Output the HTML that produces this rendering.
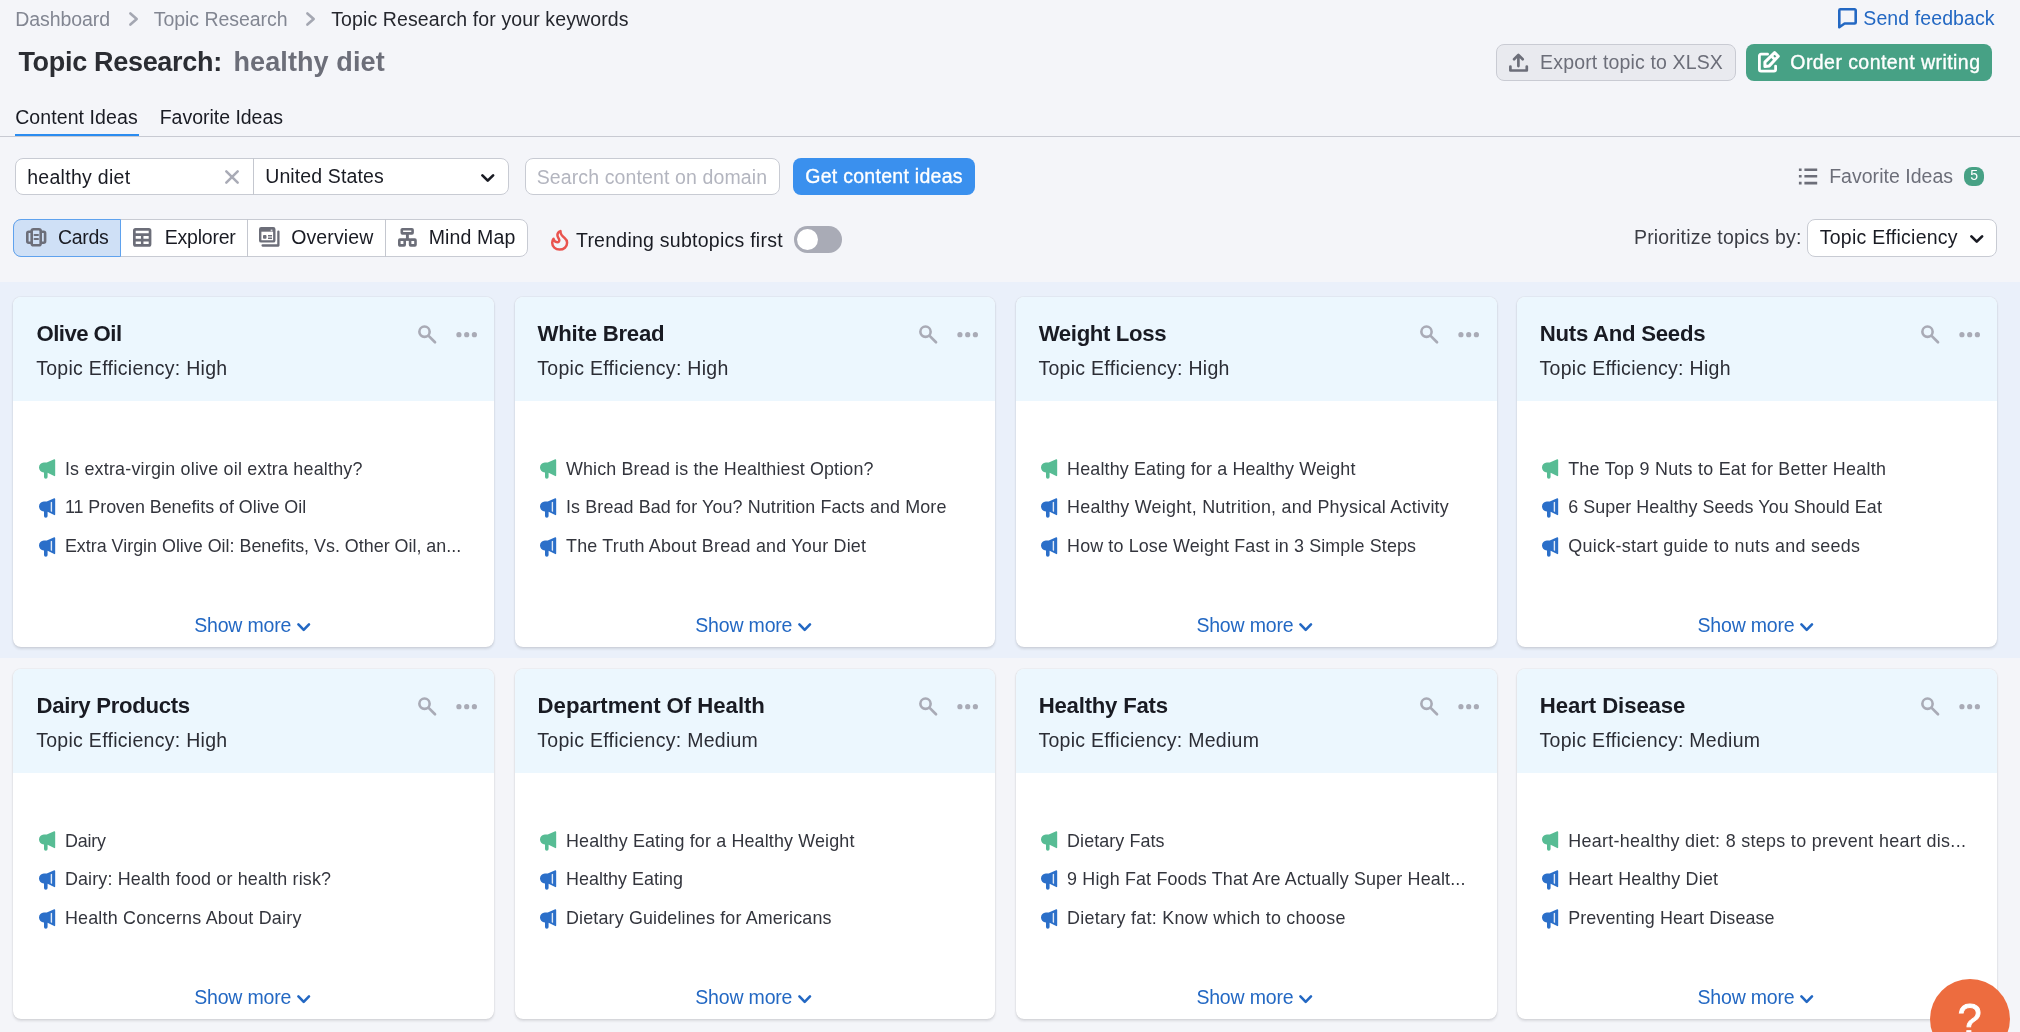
<!DOCTYPE html>
<html lang="en"><head><meta charset="utf-8"><title>Topic Research: healthy diet</title>
<style>
*{box-sizing:border-box;margin:0;padding:0}
html,body{width:2020px;height:1032px;overflow:hidden;background:#f4f5f9}
body{position:relative;font-family:"Liberation Sans",sans-serif;}
#root{position:absolute;left:0;top:0;width:2020px;height:1032px;will-change:transform}
.t{position:absolute;white-space:nowrap;line-height:1em;display:block}
.a{position:absolute;display:block}
svg{position:absolute;display:block;overflow:visible}
.card{position:absolute;width:480.8px;height:350px;background:#fff;border-radius:8px;box-shadow:0 0 1.3px rgba(25,27,35,.16),0 1.3px 2.7px rgba(25,27,35,.12);overflow:hidden}
.card .hd{position:absolute;left:0;top:0;right:0;height:104px;background:#ecf7fe}
</style></head>
<body>
<div id="root">
<div class="a" style="left:0;top:281.5px;width:2020px;height:376px;background:#eaf0fa"></div>
<span class="t" style="left:15.20px;top:10.00px;font-size:19.5px;letter-spacing:-0.059px;color:#828692;">Dashboard</span>
<span class="t" style="left:153.70px;top:10.00px;font-size:19.5px;letter-spacing:-0.037px;color:#828692;">Topic Research</span>
<span class="t" style="left:331.20px;top:10.00px;font-size:19.5px;letter-spacing:0.118px;color:#25272e;">Topic Research for your keywords</span>
<svg style="left:128.8px;top:12px" width="9.2" height="14" viewBox="0 0 9.2 14"><path d="M1.4 1.4 L7.7 7 L1.4 12.6" fill="none" stroke="#a4a7b2" stroke-width="2.6" stroke-linecap="round" stroke-linejoin="round"/></svg>
<svg style="left:305.8px;top:12px" width="9.2" height="14" viewBox="0 0 9.2 14"><path d="M1.4 1.4 L7.7 7 L1.4 12.6" fill="none" stroke="#a4a7b2" stroke-width="2.6" stroke-linecap="round" stroke-linejoin="round"/></svg>
<svg style="left:1837.7px;top:8px" width="19" height="20.6" viewBox="0 0 19 20.6"><path d="M1.3 19.2 V2.4 A1.1 1.1 0 0 1 2.4 1.3 H16.6 A1.1 1.1 0 0 1 17.7 2.4 V14.4 A1.1 1.1 0 0 1 16.6 15.5 H6.6 Z" fill="none" stroke="#2368c3" stroke-width="2.6" stroke-linejoin="round"/></svg>
<span class="t" style="left:1863.30px;top:9.00px;font-size:19.5px;letter-spacing:0.096px;color:#2368c3;">Send feedback</span>
<span class="t" style="left:18.45px;top:49.00px;font-size:27px;letter-spacing:-0.311px;color:#2b2d33;font-weight:700;">Topic Research:</span>
<span class="t" style="left:233.45px;top:49.00px;font-size:27px;letter-spacing:0.105px;color:#6c6e79;font-weight:700;">healthy diet</span>
<div class="a" style="left:1496px;top:44.1px;width:240px;height:36.6px;background:#e9eaef;border:1px solid #c9cbd3;border-radius:8px"></div>
<svg style="left:1509.2px;top:52.9px" width="19.2" height="18.9" viewBox="0 0 19.2 18.9"><path d="M9.4 13.1 V2.2 M5.1 6.2 L9.4 1.9 L13.7 6.2 M1.4 13.6 V17.5 H17.8 V13.6" fill="none" stroke="#6c6e79" stroke-width="2.7" stroke-linecap="round" stroke-linejoin="round"/></svg>
<span class="t" style="left:1540.10px;top:53.00px;font-size:19.5px;letter-spacing:0.149px;color:#6c6e79;">Export topic to XLSX</span>
<div class="a" style="left:1746.3px;top:44.1px;width:246.2px;height:36.6px;background:#47a185;border-radius:8px"></div>
<svg style="left:1758.1px;top:51.3px" width="22" height="21.7" viewBox="0 0 22 21.7"><path d="M9.6 3.15 H3 A1.6 1.6 0 0 0 1.4 4.75 V18.5 A1.6 1.6 0 0 0 3 20.1 H16 A1.6 1.6 0 0 0 17.6 18.5 V15.1" fill="none" stroke="#fff" stroke-width="2.8" stroke-linecap="round" stroke-linejoin="round"/><path d="M16.6 1.6 L20.3 5.3 L11.3 14.9 L6.9 15.5 L6.9 11.1 Z" fill="none" stroke="#fff" stroke-width="3" stroke-linejoin="round"/><path d="M13.3 5 L17 8.7" stroke="#fff" stroke-width="2.8"/></svg>
<span class="t" style="left:1790.30px;top:53.00px;font-size:19.5px;letter-spacing:0.435px;color:#fff;-webkit-text-stroke:0.35px #fff;">Order content writing</span>
<span class="t" style="left:15.20px;top:108.00px;font-size:19.5px;letter-spacing:0.085px;color:#191b23;">Content Ideas</span>
<span class="t" style="left:159.70px;top:108.00px;font-size:19.5px;letter-spacing:-0.017px;color:#191b23;">Favorite Ideas</span>
<div class="a" style="left:0;top:135.7px;width:2020px;height:1.3px;background:#c8cad2"></div>
<div class="a" style="left:15px;top:134px;width:124px;height:2.4px;background:#2b8cf0"></div>
<div class="a" style="left:15px;top:158px;width:494px;height:37px;background:#fff;border:1px solid #c8cbd3;border-radius:8px"></div>
<div class="a" style="left:252.7px;top:158px;width:1.2px;height:37px;background:#c4c7cf"></div>
<span class="t" style="left:27.20px;top:168.00px;font-size:19.5px;letter-spacing:0.286px;color:#191b23;">healthy diet</span>
<svg style="left:225px;top:170px" width="14" height="14" viewBox="0 0 14 14"><path d="M1.3 1.3 L12.7 12.7 M12.7 1.3 L1.3 12.7" fill="none" stroke="#a9abb6" stroke-width="2.5" stroke-linecap="round"/></svg>
<span class="t" style="left:265.20px;top:167.00px;font-size:19.5px;letter-spacing:0.127px;color:#191b23;">United States</span>
<svg style="left:481.3px;top:174.2px" width="13.5" height="8" viewBox="0 0 13.5 8"><path d="M1.4 1.4 L6.75 6.6 L12.1 1.4" fill="none" stroke="#191b23" stroke-width="2.7" stroke-linecap="round" stroke-linejoin="round"/></svg>
<div class="a" style="left:524.5px;top:158px;width:255.3px;height:37px;background:#fff;border:1px solid #c8cbd3;border-radius:8px"></div>
<span class="t" style="left:536.70px;top:168.00px;font-size:19.5px;letter-spacing:0.121px;color:#b3b5bf;">Search content on domain</span>
<div class="a" style="left:793px;top:158px;width:182px;height:37px;background:#3a90ee;border-radius:8px"></div>
<span class="t" style="left:805.20px;top:167.00px;font-size:19.5px;letter-spacing:0.283px;color:#fff;-webkit-text-stroke:0.35px #fff;">Get content ideas</span>
<svg style="left:1797.5px;top:168.2px" width="20" height="17" viewBox="0 0 20 17"><path d="M6.4 1.8 H19.2 M6.4 8.2 H19.2 M6.4 15.1 H19.2 M.9 1.8 H3.6 M.9 8.2 H3.6 M.9 15.1 H3.6" stroke="#6c6e79" stroke-width="2.6" fill="none"/></svg>
<span class="t" style="left:1829.20px;top:167.00px;font-size:19.5px;letter-spacing:0.021px;color:#6c6e79;">Favorite Ideas</span>
<div class="a" style="left:1964px;top:167px;width:20.3px;height:19.3px;background:#47a185;border-radius:8px"></div>
<span class="t" style="left:1970.30px;top:168.00px;font-size:14px;letter-spacing:0.000px;color:#fff;">5</span>
<div class="a" style="left:13px;top:219px;width:514.5px;height:37.6px;background:#fff;border:1px solid #c8cbd3;border-radius:8px"></div>
<div class="a" style="left:13px;top:219px;width:108.3px;height:37.6px;background:#cfe0f6;border:1.3px solid #5fa2ee;border-radius:8px 0 0 8px"></div>
<div class="a" style="left:246.7px;top:219px;width:1.2px;height:37.6px;background:#c4c7cf"></div>
<div class="a" style="left:384.7px;top:219px;width:1.2px;height:37.6px;background:#c4c7cf"></div>
<svg style="left:26px;top:228.4px" width="20.4" height="18.5" viewBox="0 0 20.4 18.5"><g fill="none" stroke="#6c6e79" stroke-width="2.6" stroke-linejoin="round"><rect x="5.7" y="1.3" width="9" height="15.9" rx="1.8"/><path d="M5.7 3.7 H2.8 A1.5 1.5 0 0 0 1.3 5.2 V13.3 A1.5 1.5 0 0 0 2.8 14.8 H5.7 M14.7 3.7 H17.6 A1.5 1.5 0 0 1 19.1 5.2 V13.3 A1.5 1.5 0 0 1 17.6 14.8 H14.7"/></g><path d="M8.6 7 H12 M8.6 11 H12" stroke="#6c6e79" stroke-width="2.1" stroke-linecap="round"/></svg>
<span class="t" style="left:57.95px;top:228.00px;font-size:19.5px;letter-spacing:-0.275px;color:#191b23;">Cards</span>
<svg style="left:133.3px;top:228.4px" width="18.4" height="18.7" viewBox="0 0 18.4 18.7"><g fill="none" stroke="#6c6e79"><rect x="1.35" y="1.35" width="15.7" height="16" rx="1.2" stroke-width="2.7"/><path d="M1.3 6.65 H17.1 M1.3 12.05 H17.1" stroke-width="2.7"/><path d="M9.2 6.65 V17.4" stroke-width="2.5"/></g></svg>
<span class="t" style="left:164.70px;top:228.00px;font-size:19.5px;letter-spacing:-0.211px;color:#191b23;">Explorer</span>
<svg style="left:259.4px;top:227px" width="20.6" height="19.7" viewBox="0 0 20.6 19.7"><g fill="none" stroke="#6c6e79" stroke-linejoin="round"><rect x="1.2" y="1.2" width="14.1" height="13.2" rx="1" stroke-width="2.4"/><path d="M1.2 2.9 H15.3" stroke-width="3.6"/><path d="M19.4 4.6 V18.5 H3.6" stroke-width="2.3" stroke-linecap="round"/><path d="M9 8.8 H13 M9 11.2 H13" stroke-width="1.4"/></g><rect x="4" y="8.1" width="3.5" height="3.6" rx=".9" fill="#6c6e79"/><rect x="11.7" y="2.6" width="1.7" height="1.7" fill="#fff" opacity=".75"/></svg>
<span class="t" style="left:291.20px;top:228.00px;font-size:19.5px;letter-spacing:0.111px;color:#191b23;">Overview</span>
<svg style="left:398.1px;top:228.4px" width="18.8" height="18.7" viewBox="0 0 18.8 18.7"><g fill="none" stroke="#6c6e79" stroke-width="2.6" stroke-linejoin="round"><rect x="3.8" y="1.3" width="10.8" height="4.1" rx=".6"/><rect x="1.3" y="11.6" width="5.4" height="5.8" rx=".6"/><rect x="12.1" y="11.6" width="5.4" height="5.8" rx=".6"/><path d="M6.7 11.6 H12.1"/><path d="M9.4 5.4 V11.6" stroke-width="2.9"/></g></svg>
<span class="t" style="left:428.70px;top:228.00px;font-size:19.5px;letter-spacing:0.139px;color:#191b23;">Mind Map</span>
<svg style="left:551px;top:230px" width="17.3" height="20.8" viewBox="0 0 17.3 20.8"><path d="M9.5 1.1 C9.3 4 11 6 13.6 8 C15.4 9.4 16.1 11 16.1 12.8 C16.1 16.8 12.8 19.6 8.6 19.6 C4.4 19.6 1.2 16.8 1.2 12.8 C1.2 11.2 1.7 9.8 2.5 8.8 C2.9 10.6 4.2 12.2 6.2 12.2 C7.8 12.2 8.6 11 8.2 9.6 C7.8 8.2 6.4 7 6.4 5 C6.4 3.2 7.6 1.8 9.5 1.1 Z" fill="none" stroke="#e9544f" stroke-width="2.5" stroke-linejoin="round"/></svg>
<span class="t" style="left:575.95px;top:231.00px;font-size:19.5px;letter-spacing:0.251px;color:#191b23;">Trending subtopics first</span>
<div class="a" style="left:793.7px;top:226.2px;width:48.4px;height:26.5px;background:#a9abb6;border-radius:13.3px"></div>
<div class="a" style="left:796.8px;top:228.9px;width:21.2px;height:21.2px;background:#fff;border-radius:50%"></div>
<span class="t" style="left:1633.95px;top:228.00px;font-size:19.5px;letter-spacing:0.189px;color:#3b3d45;">Prioritize topics by:</span>
<div class="a" style="left:1807px;top:219px;width:189.7px;height:37.6px;background:#fff;border:1px solid #c8cbd3;border-radius:8px"></div>
<span class="t" style="left:1819.70px;top:228.00px;font-size:19.5px;letter-spacing:0.260px;color:#191b23;">Topic Efficiency</span>
<svg style="left:1970px;top:234.8px" width="13.5" height="8" viewBox="0 0 13.5 8"><path d="M1.4 1.4 L6.75 6.6 L12.1 1.4" fill="none" stroke="#191b23" stroke-width="2.7" stroke-linecap="round" stroke-linejoin="round"/></svg>
<div class="card" style="left:13.00px;top:297.00px"><div class="hd"></div></div>
<span class="t" style="left:36.50px;top:323.00px;font-size:22.2px;letter-spacing:-0.556px;color:#191b23;font-weight:700;">Olive Oil</span>
<span class="t" style="left:36.20px;top:359.00px;font-size:19.5px;letter-spacing:0.286px;color:#2b2d35;">Topic Efficiency: High</span>
<svg style="left:417.80px;top:325.40px" width="19" height="19" viewBox="0 0 19 19"><circle cx="6.5" cy="6.7" r="5.15" fill="none" stroke="#a9abb6" stroke-width="2.6"/><path d="M10.4 10.6 L17 17.2" stroke="#a9abb6" stroke-width="2.7" stroke-linecap="round"/></svg>
<svg style="left:456.00px;top:332.20px" width="22" height="5.4" viewBox="0 0 22 5.4"><circle cx="2.9" cy="2.7" r="2.6" fill="#a9abb6"/><circle cx="10.7" cy="2.7" r="2.6" fill="#a9abb6"/><circle cx="18.4" cy="2.7" r="2.6" fill="#a9abb6"/></svg>
<svg style="left:38.90px;top:459.30px" width="16.2" height="20" viewBox="0 0 16.2 20"><path d="M15.2 .2 C15.7 0 16.2 .3 16.2 .9 V16.4 C16.2 17 15.7 17.4 15.2 17.1 L8.6 13.8 V18 A1.8 1.8 0 0 1 5 18 V13.4 H4.8 A4.9 4.9 0 0 1 0 8.45 A4.9 4.9 0 0 1 4.8 3.5 H7.8 Z" fill="#57bc94"/></svg>
<span class="t" style="left:64.90px;top:461.00px;font-size:17.9px;letter-spacing:0.210px;color:#33353d;">Is extra-virgin olive oil extra healthy?</span>
<svg style="left:38.90px;top:498.00px" width="16.2" height="20" viewBox="0 0 16.2 20"><path d="M15.2 .2 C15.7 0 16.2 .3 16.2 .9 V16.4 C16.2 17 15.7 17.4 15.2 17.1 L8.6 13.8 V18 A1.8 1.8 0 0 1 5 18 V13.4 H4.8 A4.9 4.9 0 0 1 0 8.45 A4.9 4.9 0 0 1 4.8 3.5 H7.8 Z" fill="#2b6fc9"/><path d="M11.7 4.3 L13.1 3.7 V13.9 L11.7 13.2 Z" fill="#fff" opacity=".85"/></svg>
<span class="t" style="left:64.90px;top:499.00px;font-size:17.9px;letter-spacing:-0.034px;color:#33353d;">11 Proven Benefits of Olive Oil</span>
<svg style="left:38.90px;top:536.70px" width="16.2" height="20" viewBox="0 0 16.2 20"><path d="M15.2 .2 C15.7 0 16.2 .3 16.2 .9 V16.4 C16.2 17 15.7 17.4 15.2 17.1 L8.6 13.8 V18 A1.8 1.8 0 0 1 5 18 V13.4 H4.8 A4.9 4.9 0 0 1 0 8.45 A4.9 4.9 0 0 1 4.8 3.5 H7.8 Z" fill="#2b6fc9"/><path d="M11.7 4.3 L13.1 3.7 V13.9 L11.7 13.2 Z" fill="#fff" opacity=".85"/></svg>
<span class="t" style="left:64.90px;top:538.00px;font-size:17.9px;letter-spacing:-0.002px;color:#33353d;">Extra Virgin Olive Oil: Benefits, Vs. Other Oil, an...</span>
<span class="t" style="left:194.20px;top:616.00px;font-size:19.5px;letter-spacing:-0.184px;color:#2368c3;">Show more</span>
<svg style="left:296.7px;top:623.3px" width="13.4" height="8.2" viewBox="0 0 13.4 8.2"><path d="M1.4 1.4 L6.7 6.799999999999999 L12.0 1.4" fill="none" stroke="#2368c3" stroke-width="2.6" stroke-linecap="round" stroke-linejoin="round"/></svg>
<div class="card" style="left:514.50px;top:297.00px"><div class="hd"></div></div>
<span class="t" style="left:537.60px;top:323.00px;font-size:22.2px;letter-spacing:-0.246px;color:#191b23;font-weight:700;">White Bread</span>
<span class="t" style="left:537.30px;top:359.00px;font-size:19.5px;letter-spacing:0.286px;color:#2b2d35;">Topic Efficiency: High</span>
<svg style="left:918.90px;top:325.40px" width="19" height="19" viewBox="0 0 19 19"><circle cx="6.5" cy="6.7" r="5.15" fill="none" stroke="#a9abb6" stroke-width="2.6"/><path d="M10.4 10.6 L17 17.2" stroke="#a9abb6" stroke-width="2.7" stroke-linecap="round"/></svg>
<svg style="left:957.10px;top:332.20px" width="22" height="5.4" viewBox="0 0 22 5.4"><circle cx="2.9" cy="2.7" r="2.6" fill="#a9abb6"/><circle cx="10.7" cy="2.7" r="2.6" fill="#a9abb6"/><circle cx="18.4" cy="2.7" r="2.6" fill="#a9abb6"/></svg>
<svg style="left:540.00px;top:459.30px" width="16.2" height="20" viewBox="0 0 16.2 20"><path d="M15.2 .2 C15.7 0 16.2 .3 16.2 .9 V16.4 C16.2 17 15.7 17.4 15.2 17.1 L8.6 13.8 V18 A1.8 1.8 0 0 1 5 18 V13.4 H4.8 A4.9 4.9 0 0 1 0 8.45 A4.9 4.9 0 0 1 4.8 3.5 H7.8 Z" fill="#57bc94"/></svg>
<span class="t" style="left:566.00px;top:461.00px;font-size:17.9px;letter-spacing:0.144px;color:#33353d;">Which Bread is the Healthiest Option?</span>
<svg style="left:540.00px;top:498.00px" width="16.2" height="20" viewBox="0 0 16.2 20"><path d="M15.2 .2 C15.7 0 16.2 .3 16.2 .9 V16.4 C16.2 17 15.7 17.4 15.2 17.1 L8.6 13.8 V18 A1.8 1.8 0 0 1 5 18 V13.4 H4.8 A4.9 4.9 0 0 1 0 8.45 A4.9 4.9 0 0 1 4.8 3.5 H7.8 Z" fill="#2b6fc9"/><path d="M11.7 4.3 L13.1 3.7 V13.9 L11.7 13.2 Z" fill="#fff" opacity=".85"/></svg>
<span class="t" style="left:566.00px;top:499.00px;font-size:17.9px;letter-spacing:0.121px;color:#33353d;">Is Bread Bad for You? Nutrition Facts and More</span>
<svg style="left:540.00px;top:536.70px" width="16.2" height="20" viewBox="0 0 16.2 20"><path d="M15.2 .2 C15.7 0 16.2 .3 16.2 .9 V16.4 C16.2 17 15.7 17.4 15.2 17.1 L8.6 13.8 V18 A1.8 1.8 0 0 1 5 18 V13.4 H4.8 A4.9 4.9 0 0 1 0 8.45 A4.9 4.9 0 0 1 4.8 3.5 H7.8 Z" fill="#2b6fc9"/><path d="M11.7 4.3 L13.1 3.7 V13.9 L11.7 13.2 Z" fill="#fff" opacity=".85"/></svg>
<span class="t" style="left:566.00px;top:538.00px;font-size:17.9px;letter-spacing:0.223px;color:#33353d;">The Truth About Bread and Your Diet</span>
<span class="t" style="left:695.30px;top:616.00px;font-size:19.5px;letter-spacing:-0.184px;color:#2368c3;">Show more</span>
<svg style="left:797.8px;top:623.3px" width="13.4" height="8.2" viewBox="0 0 13.4 8.2"><path d="M1.4 1.4 L6.7 6.799999999999999 L12.0 1.4" fill="none" stroke="#2368c3" stroke-width="2.6" stroke-linecap="round" stroke-linejoin="round"/></svg>
<div class="card" style="left:1015.85px;top:297.00px"><div class="hd"></div></div>
<span class="t" style="left:1038.70px;top:323.00px;font-size:22.2px;letter-spacing:-0.368px;color:#191b23;font-weight:700;">Weight Loss</span>
<span class="t" style="left:1038.40px;top:359.00px;font-size:19.5px;letter-spacing:0.286px;color:#2b2d35;">Topic Efficiency: High</span>
<svg style="left:1420.00px;top:325.40px" width="19" height="19" viewBox="0 0 19 19"><circle cx="6.5" cy="6.7" r="5.15" fill="none" stroke="#a9abb6" stroke-width="2.6"/><path d="M10.4 10.6 L17 17.2" stroke="#a9abb6" stroke-width="2.7" stroke-linecap="round"/></svg>
<svg style="left:1458.20px;top:332.20px" width="22" height="5.4" viewBox="0 0 22 5.4"><circle cx="2.9" cy="2.7" r="2.6" fill="#a9abb6"/><circle cx="10.7" cy="2.7" r="2.6" fill="#a9abb6"/><circle cx="18.4" cy="2.7" r="2.6" fill="#a9abb6"/></svg>
<svg style="left:1041.10px;top:459.30px" width="16.2" height="20" viewBox="0 0 16.2 20"><path d="M15.2 .2 C15.7 0 16.2 .3 16.2 .9 V16.4 C16.2 17 15.7 17.4 15.2 17.1 L8.6 13.8 V18 A1.8 1.8 0 0 1 5 18 V13.4 H4.8 A4.9 4.9 0 0 1 0 8.45 A4.9 4.9 0 0 1 4.8 3.5 H7.8 Z" fill="#57bc94"/></svg>
<span class="t" style="left:1067.10px;top:461.00px;font-size:17.9px;letter-spacing:0.154px;color:#33353d;">Healthy Eating for a Healthy Weight</span>
<svg style="left:1041.10px;top:498.00px" width="16.2" height="20" viewBox="0 0 16.2 20"><path d="M15.2 .2 C15.7 0 16.2 .3 16.2 .9 V16.4 C16.2 17 15.7 17.4 15.2 17.1 L8.6 13.8 V18 A1.8 1.8 0 0 1 5 18 V13.4 H4.8 A4.9 4.9 0 0 1 0 8.45 A4.9 4.9 0 0 1 4.8 3.5 H7.8 Z" fill="#2b6fc9"/><path d="M11.7 4.3 L13.1 3.7 V13.9 L11.7 13.2 Z" fill="#fff" opacity=".85"/></svg>
<span class="t" style="left:1067.10px;top:499.00px;font-size:17.9px;letter-spacing:0.258px;color:#33353d;">Healthy Weight, Nutrition, and Physical Activity</span>
<svg style="left:1041.10px;top:536.70px" width="16.2" height="20" viewBox="0 0 16.2 20"><path d="M15.2 .2 C15.7 0 16.2 .3 16.2 .9 V16.4 C16.2 17 15.7 17.4 15.2 17.1 L8.6 13.8 V18 A1.8 1.8 0 0 1 5 18 V13.4 H4.8 A4.9 4.9 0 0 1 0 8.45 A4.9 4.9 0 0 1 4.8 3.5 H7.8 Z" fill="#2b6fc9"/><path d="M11.7 4.3 L13.1 3.7 V13.9 L11.7 13.2 Z" fill="#fff" opacity=".85"/></svg>
<span class="t" style="left:1067.10px;top:538.00px;font-size:17.9px;letter-spacing:0.129px;color:#33353d;">How to Lose Weight Fast in 3 Simple Steps</span>
<span class="t" style="left:1196.40px;top:616.00px;font-size:19.5px;letter-spacing:-0.184px;color:#2368c3;">Show more</span>
<svg style="left:1298.9px;top:623.3px" width="13.4" height="8.2" viewBox="0 0 13.4 8.2"><path d="M1.4 1.4 L6.7 6.799999999999999 L12.0 1.4" fill="none" stroke="#2368c3" stroke-width="2.6" stroke-linecap="round" stroke-linejoin="round"/></svg>
<div class="card" style="left:1516.50px;top:297.00px"><div class="hd"></div></div>
<span class="t" style="left:1539.80px;top:323.00px;font-size:22.2px;letter-spacing:-0.275px;color:#191b23;font-weight:700;">Nuts And Seeds</span>
<span class="t" style="left:1539.50px;top:359.00px;font-size:19.5px;letter-spacing:0.286px;color:#2b2d35;">Topic Efficiency: High</span>
<svg style="left:1921.10px;top:325.40px" width="19" height="19" viewBox="0 0 19 19"><circle cx="6.5" cy="6.7" r="5.15" fill="none" stroke="#a9abb6" stroke-width="2.6"/><path d="M10.4 10.6 L17 17.2" stroke="#a9abb6" stroke-width="2.7" stroke-linecap="round"/></svg>
<svg style="left:1959.30px;top:332.20px" width="22" height="5.4" viewBox="0 0 22 5.4"><circle cx="2.9" cy="2.7" r="2.6" fill="#a9abb6"/><circle cx="10.7" cy="2.7" r="2.6" fill="#a9abb6"/><circle cx="18.4" cy="2.7" r="2.6" fill="#a9abb6"/></svg>
<svg style="left:1542.20px;top:459.30px" width="16.2" height="20" viewBox="0 0 16.2 20"><path d="M15.2 .2 C15.7 0 16.2 .3 16.2 .9 V16.4 C16.2 17 15.7 17.4 15.2 17.1 L8.6 13.8 V18 A1.8 1.8 0 0 1 5 18 V13.4 H4.8 A4.9 4.9 0 0 1 0 8.45 A4.9 4.9 0 0 1 4.8 3.5 H7.8 Z" fill="#57bc94"/></svg>
<span class="t" style="left:1568.20px;top:461.00px;font-size:17.9px;letter-spacing:0.256px;color:#33353d;">The Top 9 Nuts to Eat for Better Health</span>
<svg style="left:1542.20px;top:498.00px" width="16.2" height="20" viewBox="0 0 16.2 20"><path d="M15.2 .2 C15.7 0 16.2 .3 16.2 .9 V16.4 C16.2 17 15.7 17.4 15.2 17.1 L8.6 13.8 V18 A1.8 1.8 0 0 1 5 18 V13.4 H4.8 A4.9 4.9 0 0 1 0 8.45 A4.9 4.9 0 0 1 4.8 3.5 H7.8 Z" fill="#2b6fc9"/><path d="M11.7 4.3 L13.1 3.7 V13.9 L11.7 13.2 Z" fill="#fff" opacity=".85"/></svg>
<span class="t" style="left:1568.20px;top:499.00px;font-size:17.9px;letter-spacing:0.067px;color:#33353d;">6 Super Healthy Seeds You Should Eat</span>
<svg style="left:1542.20px;top:536.70px" width="16.2" height="20" viewBox="0 0 16.2 20"><path d="M15.2 .2 C15.7 0 16.2 .3 16.2 .9 V16.4 C16.2 17 15.7 17.4 15.2 17.1 L8.6 13.8 V18 A1.8 1.8 0 0 1 5 18 V13.4 H4.8 A4.9 4.9 0 0 1 0 8.45 A4.9 4.9 0 0 1 4.8 3.5 H7.8 Z" fill="#2b6fc9"/><path d="M11.7 4.3 L13.1 3.7 V13.9 L11.7 13.2 Z" fill="#fff" opacity=".85"/></svg>
<span class="t" style="left:1568.20px;top:538.00px;font-size:17.9px;letter-spacing:0.302px;color:#33353d;">Quick-start guide to nuts and seeds</span>
<span class="t" style="left:1697.50px;top:616.00px;font-size:19.5px;letter-spacing:-0.184px;color:#2368c3;">Show more</span>
<svg style="left:1800.0000000000002px;top:623.3px" width="13.4" height="8.2" viewBox="0 0 13.4 8.2"><path d="M1.4 1.4 L6.7 6.799999999999999 L12.0 1.4" fill="none" stroke="#2368c3" stroke-width="2.6" stroke-linecap="round" stroke-linejoin="round"/></svg>
<div class="card" style="left:13.00px;top:669.00px"><div class="hd"></div></div>
<span class="t" style="left:36.50px;top:695.00px;font-size:22.2px;letter-spacing:-0.330px;color:#191b23;font-weight:700;">Dairy Products</span>
<span class="t" style="left:36.20px;top:731.00px;font-size:19.5px;letter-spacing:0.286px;color:#2b2d35;">Topic Efficiency: High</span>
<svg style="left:417.80px;top:697.40px" width="19" height="19" viewBox="0 0 19 19"><circle cx="6.5" cy="6.7" r="5.15" fill="none" stroke="#a9abb6" stroke-width="2.6"/><path d="M10.4 10.6 L17 17.2" stroke="#a9abb6" stroke-width="2.7" stroke-linecap="round"/></svg>
<svg style="left:456.00px;top:704.20px" width="22" height="5.4" viewBox="0 0 22 5.4"><circle cx="2.9" cy="2.7" r="2.6" fill="#a9abb6"/><circle cx="10.7" cy="2.7" r="2.6" fill="#a9abb6"/><circle cx="18.4" cy="2.7" r="2.6" fill="#a9abb6"/></svg>
<svg style="left:38.90px;top:831.30px" width="16.2" height="20" viewBox="0 0 16.2 20"><path d="M15.2 .2 C15.7 0 16.2 .3 16.2 .9 V16.4 C16.2 17 15.7 17.4 15.2 17.1 L8.6 13.8 V18 A1.8 1.8 0 0 1 5 18 V13.4 H4.8 A4.9 4.9 0 0 1 0 8.45 A4.9 4.9 0 0 1 4.8 3.5 H7.8 Z" fill="#57bc94"/></svg>
<span class="t" style="left:64.90px;top:833.00px;font-size:17.9px;letter-spacing:-0.152px;color:#33353d;">Dairy</span>
<svg style="left:38.90px;top:870.00px" width="16.2" height="20" viewBox="0 0 16.2 20"><path d="M15.2 .2 C15.7 0 16.2 .3 16.2 .9 V16.4 C16.2 17 15.7 17.4 15.2 17.1 L8.6 13.8 V18 A1.8 1.8 0 0 1 5 18 V13.4 H4.8 A4.9 4.9 0 0 1 0 8.45 A4.9 4.9 0 0 1 4.8 3.5 H7.8 Z" fill="#2b6fc9"/><path d="M11.7 4.3 L13.1 3.7 V13.9 L11.7 13.2 Z" fill="#fff" opacity=".85"/></svg>
<span class="t" style="left:64.90px;top:871.00px;font-size:17.9px;letter-spacing:0.169px;color:#33353d;">Dairy: Health food or health risk?</span>
<svg style="left:38.90px;top:908.70px" width="16.2" height="20" viewBox="0 0 16.2 20"><path d="M15.2 .2 C15.7 0 16.2 .3 16.2 .9 V16.4 C16.2 17 15.7 17.4 15.2 17.1 L8.6 13.8 V18 A1.8 1.8 0 0 1 5 18 V13.4 H4.8 A4.9 4.9 0 0 1 0 8.45 A4.9 4.9 0 0 1 4.8 3.5 H7.8 Z" fill="#2b6fc9"/><path d="M11.7 4.3 L13.1 3.7 V13.9 L11.7 13.2 Z" fill="#fff" opacity=".85"/></svg>
<span class="t" style="left:64.90px;top:910.00px;font-size:17.9px;letter-spacing:0.221px;color:#33353d;">Health Concerns About Dairy</span>
<span class="t" style="left:194.20px;top:988.00px;font-size:19.5px;letter-spacing:-0.184px;color:#2368c3;">Show more</span>
<svg style="left:296.7px;top:995.3px" width="13.4" height="8.2" viewBox="0 0 13.4 8.2"><path d="M1.4 1.4 L6.7 6.799999999999999 L12.0 1.4" fill="none" stroke="#2368c3" stroke-width="2.6" stroke-linecap="round" stroke-linejoin="round"/></svg>
<div class="card" style="left:514.50px;top:669.00px"><div class="hd"></div></div>
<span class="t" style="left:537.60px;top:695.00px;font-size:22.2px;letter-spacing:-0.039px;color:#191b23;font-weight:700;">Department Of Health</span>
<span class="t" style="left:537.30px;top:731.00px;font-size:19.5px;letter-spacing:0.276px;color:#2b2d35;">Topic Efficiency: Medium</span>
<svg style="left:918.90px;top:697.40px" width="19" height="19" viewBox="0 0 19 19"><circle cx="6.5" cy="6.7" r="5.15" fill="none" stroke="#a9abb6" stroke-width="2.6"/><path d="M10.4 10.6 L17 17.2" stroke="#a9abb6" stroke-width="2.7" stroke-linecap="round"/></svg>
<svg style="left:957.10px;top:704.20px" width="22" height="5.4" viewBox="0 0 22 5.4"><circle cx="2.9" cy="2.7" r="2.6" fill="#a9abb6"/><circle cx="10.7" cy="2.7" r="2.6" fill="#a9abb6"/><circle cx="18.4" cy="2.7" r="2.6" fill="#a9abb6"/></svg>
<svg style="left:540.00px;top:831.30px" width="16.2" height="20" viewBox="0 0 16.2 20"><path d="M15.2 .2 C15.7 0 16.2 .3 16.2 .9 V16.4 C16.2 17 15.7 17.4 15.2 17.1 L8.6 13.8 V18 A1.8 1.8 0 0 1 5 18 V13.4 H4.8 A4.9 4.9 0 0 1 0 8.45 A4.9 4.9 0 0 1 4.8 3.5 H7.8 Z" fill="#57bc94"/></svg>
<span class="t" style="left:566.00px;top:833.00px;font-size:17.9px;letter-spacing:0.157px;color:#33353d;">Healthy Eating for a Healthy Weight</span>
<svg style="left:540.00px;top:870.00px" width="16.2" height="20" viewBox="0 0 16.2 20"><path d="M15.2 .2 C15.7 0 16.2 .3 16.2 .9 V16.4 C16.2 17 15.7 17.4 15.2 17.1 L8.6 13.8 V18 A1.8 1.8 0 0 1 5 18 V13.4 H4.8 A4.9 4.9 0 0 1 0 8.45 A4.9 4.9 0 0 1 4.8 3.5 H7.8 Z" fill="#2b6fc9"/><path d="M11.7 4.3 L13.1 3.7 V13.9 L11.7 13.2 Z" fill="#fff" opacity=".85"/></svg>
<span class="t" style="left:566.00px;top:871.00px;font-size:17.9px;letter-spacing:0.053px;color:#33353d;">Healthy Eating</span>
<svg style="left:540.00px;top:908.70px" width="16.2" height="20" viewBox="0 0 16.2 20"><path d="M15.2 .2 C15.7 0 16.2 .3 16.2 .9 V16.4 C16.2 17 15.7 17.4 15.2 17.1 L8.6 13.8 V18 A1.8 1.8 0 0 1 5 18 V13.4 H4.8 A4.9 4.9 0 0 1 0 8.45 A4.9 4.9 0 0 1 4.8 3.5 H7.8 Z" fill="#2b6fc9"/><path d="M11.7 4.3 L13.1 3.7 V13.9 L11.7 13.2 Z" fill="#fff" opacity=".85"/></svg>
<span class="t" style="left:566.00px;top:910.00px;font-size:17.9px;letter-spacing:0.161px;color:#33353d;">Dietary Guidelines for Americans</span>
<span class="t" style="left:695.30px;top:988.00px;font-size:19.5px;letter-spacing:-0.184px;color:#2368c3;">Show more</span>
<svg style="left:797.8px;top:995.3px" width="13.4" height="8.2" viewBox="0 0 13.4 8.2"><path d="M1.4 1.4 L6.7 6.799999999999999 L12.0 1.4" fill="none" stroke="#2368c3" stroke-width="2.6" stroke-linecap="round" stroke-linejoin="round"/></svg>
<div class="card" style="left:1015.85px;top:669.00px"><div class="hd"></div></div>
<span class="t" style="left:1038.70px;top:695.00px;font-size:22.2px;letter-spacing:-0.232px;color:#191b23;font-weight:700;">Healthy Fats</span>
<span class="t" style="left:1038.40px;top:731.00px;font-size:19.5px;letter-spacing:0.276px;color:#2b2d35;">Topic Efficiency: Medium</span>
<svg style="left:1420.00px;top:697.40px" width="19" height="19" viewBox="0 0 19 19"><circle cx="6.5" cy="6.7" r="5.15" fill="none" stroke="#a9abb6" stroke-width="2.6"/><path d="M10.4 10.6 L17 17.2" stroke="#a9abb6" stroke-width="2.7" stroke-linecap="round"/></svg>
<svg style="left:1458.20px;top:704.20px" width="22" height="5.4" viewBox="0 0 22 5.4"><circle cx="2.9" cy="2.7" r="2.6" fill="#a9abb6"/><circle cx="10.7" cy="2.7" r="2.6" fill="#a9abb6"/><circle cx="18.4" cy="2.7" r="2.6" fill="#a9abb6"/></svg>
<svg style="left:1041.10px;top:831.30px" width="16.2" height="20" viewBox="0 0 16.2 20"><path d="M15.2 .2 C15.7 0 16.2 .3 16.2 .9 V16.4 C16.2 17 15.7 17.4 15.2 17.1 L8.6 13.8 V18 A1.8 1.8 0 0 1 5 18 V13.4 H4.8 A4.9 4.9 0 0 1 0 8.45 A4.9 4.9 0 0 1 4.8 3.5 H7.8 Z" fill="#57bc94"/></svg>
<span class="t" style="left:1067.10px;top:833.00px;font-size:17.9px;letter-spacing:0.090px;color:#33353d;">Dietary Fats</span>
<svg style="left:1041.10px;top:870.00px" width="16.2" height="20" viewBox="0 0 16.2 20"><path d="M15.2 .2 C15.7 0 16.2 .3 16.2 .9 V16.4 C16.2 17 15.7 17.4 15.2 17.1 L8.6 13.8 V18 A1.8 1.8 0 0 1 5 18 V13.4 H4.8 A4.9 4.9 0 0 1 0 8.45 A4.9 4.9 0 0 1 4.8 3.5 H7.8 Z" fill="#2b6fc9"/><path d="M11.7 4.3 L13.1 3.7 V13.9 L11.7 13.2 Z" fill="#fff" opacity=".85"/></svg>
<span class="t" style="left:1067.10px;top:871.00px;font-size:17.9px;letter-spacing:0.163px;color:#33353d;">9 High Fat Foods That Are Actually Super Healt...</span>
<svg style="left:1041.10px;top:908.70px" width="16.2" height="20" viewBox="0 0 16.2 20"><path d="M15.2 .2 C15.7 0 16.2 .3 16.2 .9 V16.4 C16.2 17 15.7 17.4 15.2 17.1 L8.6 13.8 V18 A1.8 1.8 0 0 1 5 18 V13.4 H4.8 A4.9 4.9 0 0 1 0 8.45 A4.9 4.9 0 0 1 4.8 3.5 H7.8 Z" fill="#2b6fc9"/><path d="M11.7 4.3 L13.1 3.7 V13.9 L11.7 13.2 Z" fill="#fff" opacity=".85"/></svg>
<span class="t" style="left:1067.10px;top:910.00px;font-size:17.9px;letter-spacing:0.277px;color:#33353d;">Dietary fat: Know which to choose</span>
<span class="t" style="left:1196.40px;top:988.00px;font-size:19.5px;letter-spacing:-0.184px;color:#2368c3;">Show more</span>
<svg style="left:1298.9px;top:995.3px" width="13.4" height="8.2" viewBox="0 0 13.4 8.2"><path d="M1.4 1.4 L6.7 6.799999999999999 L12.0 1.4" fill="none" stroke="#2368c3" stroke-width="2.6" stroke-linecap="round" stroke-linejoin="round"/></svg>
<div class="card" style="left:1516.50px;top:669.00px"><div class="hd"></div></div>
<span class="t" style="left:1539.80px;top:695.00px;font-size:22.2px;letter-spacing:-0.093px;color:#191b23;font-weight:700;">Heart Disease</span>
<span class="t" style="left:1539.50px;top:731.00px;font-size:19.5px;letter-spacing:0.276px;color:#2b2d35;">Topic Efficiency: Medium</span>
<svg style="left:1921.10px;top:697.40px" width="19" height="19" viewBox="0 0 19 19"><circle cx="6.5" cy="6.7" r="5.15" fill="none" stroke="#a9abb6" stroke-width="2.6"/><path d="M10.4 10.6 L17 17.2" stroke="#a9abb6" stroke-width="2.7" stroke-linecap="round"/></svg>
<svg style="left:1959.30px;top:704.20px" width="22" height="5.4" viewBox="0 0 22 5.4"><circle cx="2.9" cy="2.7" r="2.6" fill="#a9abb6"/><circle cx="10.7" cy="2.7" r="2.6" fill="#a9abb6"/><circle cx="18.4" cy="2.7" r="2.6" fill="#a9abb6"/></svg>
<svg style="left:1542.20px;top:831.30px" width="16.2" height="20" viewBox="0 0 16.2 20"><path d="M15.2 .2 C15.7 0 16.2 .3 16.2 .9 V16.4 C16.2 17 15.7 17.4 15.2 17.1 L8.6 13.8 V18 A1.8 1.8 0 0 1 5 18 V13.4 H4.8 A4.9 4.9 0 0 1 0 8.45 A4.9 4.9 0 0 1 4.8 3.5 H7.8 Z" fill="#57bc94"/></svg>
<span class="t" style="left:1568.20px;top:833.00px;font-size:17.9px;letter-spacing:0.317px;color:#33353d;">Heart-healthy diet: 8 steps to prevent heart dis...</span>
<svg style="left:1542.20px;top:870.00px" width="16.2" height="20" viewBox="0 0 16.2 20"><path d="M15.2 .2 C15.7 0 16.2 .3 16.2 .9 V16.4 C16.2 17 15.7 17.4 15.2 17.1 L8.6 13.8 V18 A1.8 1.8 0 0 1 5 18 V13.4 H4.8 A4.9 4.9 0 0 1 0 8.45 A4.9 4.9 0 0 1 4.8 3.5 H7.8 Z" fill="#2b6fc9"/><path d="M11.7 4.3 L13.1 3.7 V13.9 L11.7 13.2 Z" fill="#fff" opacity=".85"/></svg>
<span class="t" style="left:1568.20px;top:871.00px;font-size:17.9px;letter-spacing:0.217px;color:#33353d;">Heart Healthy Diet</span>
<svg style="left:1542.20px;top:908.70px" width="16.2" height="20" viewBox="0 0 16.2 20"><path d="M15.2 .2 C15.7 0 16.2 .3 16.2 .9 V16.4 C16.2 17 15.7 17.4 15.2 17.1 L8.6 13.8 V18 A1.8 1.8 0 0 1 5 18 V13.4 H4.8 A4.9 4.9 0 0 1 0 8.45 A4.9 4.9 0 0 1 4.8 3.5 H7.8 Z" fill="#2b6fc9"/><path d="M11.7 4.3 L13.1 3.7 V13.9 L11.7 13.2 Z" fill="#fff" opacity=".85"/></svg>
<span class="t" style="left:1568.20px;top:910.00px;font-size:17.9px;letter-spacing:0.108px;color:#33353d;">Preventing Heart Disease</span>
<span class="t" style="left:1697.50px;top:988.00px;font-size:19.5px;letter-spacing:-0.184px;color:#2368c3;">Show more</span>
<svg style="left:1800.0000000000002px;top:995.3px" width="13.4" height="8.2" viewBox="0 0 13.4 8.2"><path d="M1.4 1.4 L6.7 6.799999999999999 L12.0 1.4" fill="none" stroke="#2368c3" stroke-width="2.6" stroke-linecap="round" stroke-linejoin="round"/></svg>
<div class="a" style="left:1930.1px;top:978.7px;width:80px;height:80px;background:#ed6c3f;border-radius:50%"></div>
<span class="t" style="left:1957.50px;top:999.00px;font-size:43.5px;letter-spacing:0.000px;color:#fff;-webkit-text-stroke:0.8px #fff;">?</span>
</div>
</body></html>
